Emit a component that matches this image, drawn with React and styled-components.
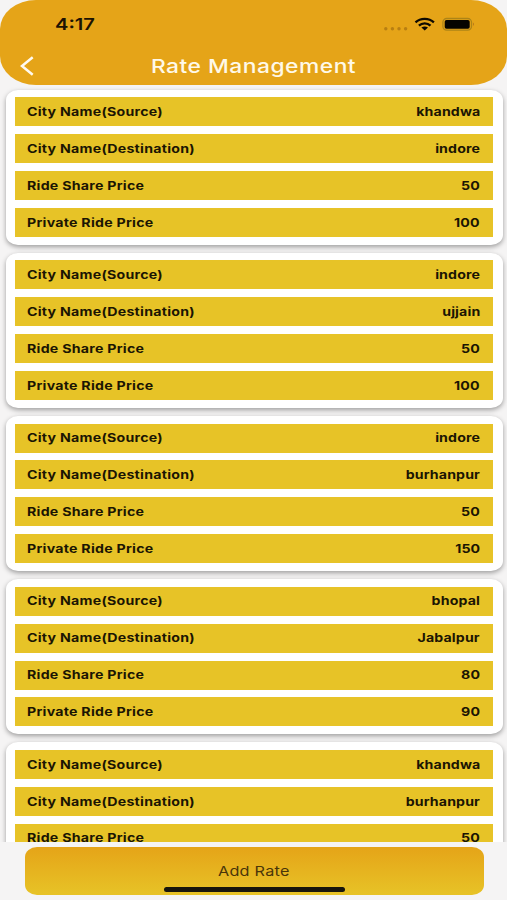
import React from "react";
import styled, { createGlobalStyle } from "styled-components";

const GlobalStyle = createGlobalStyle`
  * { box-sizing: border-box; }
  body { margin: 0; background: #f5f4f4; font-family: Inter, "Liberation Sans", sans-serif; }
`;

const Screen = styled.div`
  width: 507px;
  height: 900px;
  display: flex;
  flex-direction: column;
  overflow: hidden;
  background: #f5f4f4;
`;

const Header = styled.header`
  flex: none;
  height: 85px;
  border-radius: 36px / 29px;
  background: #e5a418;
`;

const StatusBar = styled.div`
  height: 48px;
  padding: 0 32px 0 55px;
  display: flex;
  align-items: center;
  justify-content: space-between;
`;

const Wide = styled.span`
  display: inline-block;
  white-space: nowrap;
  letter-spacing: ${(p) => p.$spacing || 0}px;
  transform: scaleX(${(p) => p.$stretch || 1.18});
  transform-origin: ${(p) => p.$from || "left"} center;
`;

const Clock = styled.div`
  font-size: 16.5px;
  font-weight: 600;
  line-height: 20px;
  color: #1c1303;
`;

const StatusIcons = styled.svg`
  display: block;
  width: 92px;
  height: 20px;
`;

const TitleBar = styled.div`
  height: 36px;
  padding: 0 20px;
  display: grid;
  grid-template-columns: 14px 1fr 14px;
  align-items: center;
`;

const BackIcon = styled.svg`
  display: block;
  width: 14px;
  height: 20px;
`;

const Title = styled.h1`
  margin: 0;
  padding: 2px 0 0 1px;
  text-align: center;
  font-size: 19px;
  font-weight: 500;
  line-height: 24px;
  color: #fff9e8;
`;

const List = styled.main`
  flex: none;
  height: 757px;
  padding: 4.5px 4.5px 0 6px;
  display: flex;
  flex-direction: column;
  gap: 8.2px;
  overflow: hidden;
`;

const Card = styled.section`
  flex: none;
  height: 155px;
  padding: 7.7px 9.5px 0 9px;
  display: flex;
  flex-direction: column;
  gap: 7.9px;
  border-radius: 12px / 10px;
  background: #fff;
  box-shadow: 0 2px 5px rgba(0, 0, 0, 0.36);
`;

const Row = styled.div`
  flex: none;
  height: 29px;
  padding: 0.4px 13px 0 12px;
  display: flex;
  align-items: center;
  justify-content: space-between;
  background: #e7c327;
  font-size: 12px;
  font-weight: 700;
  line-height: 16px;
  color: #1b1503;
`;

const Footer = styled.footer`
  flex: none;
  height: 58px;
  padding: 5px 23.5px 5px 24.5px;
  background: #f5f4f4;
`;

const AddButton = styled.button`
  width: 100%;
  height: 48px;
  padding: 15px 0 3px;
  border: 0;
  border-radius: 12px / 10px;
  display: flex;
  flex-direction: column;
  align-items: center;
  justify-content: space-between;
  background: linear-gradient(#e5a418, #e7c327);
  font-family: inherit;
  font-size: 13.5px;
  line-height: 18px;
  color: #49350a;
`;

const HomeIndicator = styled.div`
  width: 181px;
  height: 5px;
  border-radius: 3px;
  background: #17150c;
`;

const labels = [
  "City Name(Source)",
  "City Name(Destination)",
  "Ride Share Price",
  "Private Ride Price",
];

// The last card is only partly in view, so it lists its first three fields.
const rates = [
  ["khandwa", "indore", "50", "100"],
  ["indore", "ujjain", "50", "100"],
  ["indore", "burhanpur", "50", "150"],
  ["bhopal", "Jabalpur", "80", "90"],
  ["khandwa", "burhanpur", "50"],
];

function RateCard({ values }) {
  return (
    <Card>
      {values.map((value, i) => (
        <Row key={labels[i]}>
          <Wide $spacing={0.22}>{labels[i]}</Wide>
          <Wide $from="right" $spacing={0.12}>{value}</Wide>
        </Row>
      ))}
    </Card>
  );
}

export default function App() {
  return (
    <>
      <GlobalStyle />
      <Screen>
        <Header>
          <StatusBar>
            <Clock><Wide $stretch={1.22}>4:17</Wide></Clock>
            <StatusIcons viewBox="0 0 92 20" fill="none">
              <g fill="#b87f12">
                <circle cx="2.8" cy="14.7" r="1.7" />
                <circle cx="9.4" cy="14.7" r="1.7" />
                <circle cx="16" cy="14.7" r="1.7" />
                <circle cx="22.6" cy="14.7" r="1.7" />
              </g>
              <g stroke="#0d0a02" strokeWidth="2.3">
                <path d="M32.5 8.4 C37.5 3.6 45.9 3.6 50.9 8.4" />
                <path d="M35.9 11.7 C39.2 8.5 44.2 8.5 47.5 11.7" />
              </g>
              <path d="M38.4 13.5 Q41.7 11.3 45 13.5 L41.7 16.4 Z" fill="#0d0a02" />
              <rect x="59.9" y="4.5" width="28.6" height="11.6" rx="3.8" stroke="#ad8417" strokeWidth="1.3" />
              <rect x="61.7" y="6" width="25" height="8.8" rx="1.8" fill="#050400" />
              <path d="M90 8.6 Q92 10.2 90 11.9 Z" fill="#b9761a" />
            </StatusIcons>
          </StatusBar>
          <TitleBar>
            <BackIcon viewBox="0 0 14 20" fill="none">
              <path d="M12.7 1.3 L2 10 L12.7 18.7" stroke="#fffaf0" strokeWidth="2.5" />
            </BackIcon>
            <Title><Wide $from="center" $stretch={1.2} $spacing={0.42}>Rate Management</Wide></Title>
          </TitleBar>
        </Header>
        <List>
          {rates.map((values, i) => <RateCard key={i} values={values} />)}
        </List>
        <Footer>
          <AddButton>
            <Wide $from="center" $stretch={1.2} $spacing={0.2}>Add Rate</Wide>
            <HomeIndicator />
          </AddButton>
        </Footer>
      </Screen>
    </>
  );
}
